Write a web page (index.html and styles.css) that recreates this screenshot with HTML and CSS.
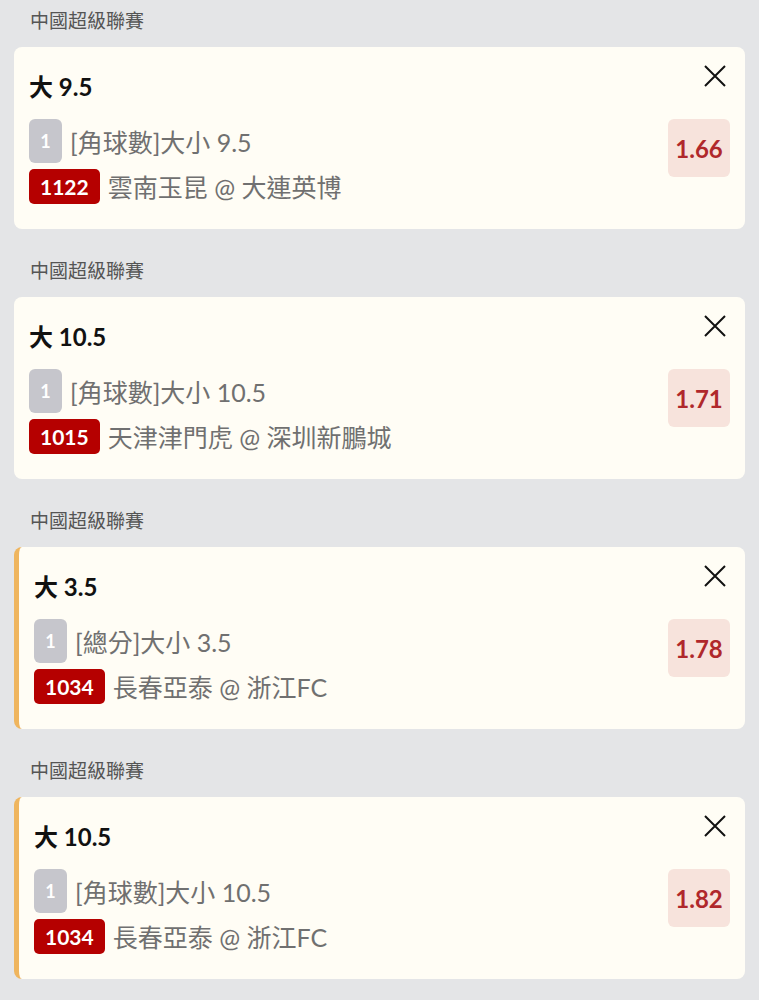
FILE: index.html
```html
<!DOCTYPE html>
<html>
<head>
    <title>Bet Slip</title>
    <meta name="viewport" content="width=device-width, initial-scale=1">
    <link rel="stylesheet" href="styles.css">
</head>
<body>
    <div class="slip">
        <div class="section">
            <div class="league">中國超級聯賽</div>
            <div class="card">
                <div class="selection">大 9.5</div>
                <span class="close"><svg viewBox="0 0 22 22" width="22" height="22"><path d="M1 1L21 21M21 1L1 21" stroke="#111" stroke-width="2" fill="none"/></svg></span>
                <div class="body">
                    <div class="lines">
                        <div class="line"><span class="leg">1</span><span class="market">[角球數]大小 9.5</span></div>
                        <div class="line"><span class="code">1122</span><span class="teams">雲南玉昆 @ 大連英博</span></div>
                    </div>
                    <div class="odds">1.66</div>
                </div>
            </div>
        </div>
        <div class="section">
            <div class="league">中國超級聯賽</div>
            <div class="card">
                <div class="selection">大 10.5</div>
                <span class="close"><svg viewBox="0 0 22 22" width="22" height="22"><path d="M1 1L21 21M21 1L1 21" stroke="#111" stroke-width="2" fill="none"/></svg></span>
                <div class="body">
                    <div class="lines">
                        <div class="line"><span class="leg">1</span><span class="market">[角球數]大小 10.5</span></div>
                        <div class="line"><span class="code">1015</span><span class="teams">天津津門虎 @ 深圳新鵬城</span></div>
                    </div>
                    <div class="odds">1.71</div>
                </div>
            </div>
        </div>
        <div class="section">
            <div class="league">中國超級聯賽</div>
            <div class="card card-changed">
                <div class="selection">大 3.5</div>
                <span class="close"><svg viewBox="0 0 22 22" width="22" height="22"><path d="M1 1L21 21M21 1L1 21" stroke="#111" stroke-width="2" fill="none"/></svg></span>
                <div class="body">
                    <div class="lines">
                        <div class="line"><span class="leg">1</span><span class="market">[總分]大小 3.5</span></div>
                        <div class="line"><span class="code">1034</span><span class="teams">長春亞泰 @ 浙江FC</span></div>
                    </div>
                    <div class="odds">1.78</div>
                </div>
            </div>
        </div>
        <div class="section">
            <div class="league">中國超級聯賽</div>
            <div class="card card-changed">
                <div class="selection">大 10.5</div>
                <span class="close"><svg viewBox="0 0 22 22" width="22" height="22"><path d="M1 1L21 21M21 1L1 21" stroke="#111" stroke-width="2" fill="none"/></svg></span>
                <div class="body">
                    <div class="lines">
                        <div class="line"><span class="leg">1</span><span class="market">[角球數]大小 10.5</span></div>
                        <div class="line"><span class="code">1034</span><span class="teams">長春亞泰 @ 浙江FC</span></div>
                    </div>
                    <div class="odds">1.82</div>
                </div>
            </div>
        </div>
    </div>
</body>
</html>
```
FILE: styles.css
```css
body {
    margin: 0;
    background: #e4e5e7;
    font-family: Lato, "Noto Sans CJK TC", sans-serif;
}
.slip {
    padding: 0 14px;
}
.section {
    margin-bottom: 21px;
}
.league {
    padding: 9px 0 14px 16px;
    line-height: 24px;
    font-size: 19px;
    color: #555;
}
.card {
    position: relative;
    height: 182px;
    box-sizing: border-box;
    padding: 25px 15px 0 15px;
    background: #fffdf5;
    border-radius: 8px;
}
.card-changed {
    border-left: 5px solid #efb55e;
}
.selection {
    line-height: 30px;
    font-size: 24px;
    font-weight: bold;
    color: #111;
    margin-bottom: 17px;
}
.close {
    position: absolute;
    top: 18px;
    right: 19px;
    width: 22px;
    height: 22px;
}
.close svg {
    display: block;
}
.body {
    display: flex;
    justify-content: space-between;
    align-items: flex-start;
}
.lines {
    display: flex;
    flex-direction: column;
    gap: 5px;
}
.line {
    display: flex;
    align-items: center;
    gap: 8px;
    color: #707070;
    font-size: 25px;
}
.leg {
    width: 33px;
    height: 44px;
    border-radius: 6px;
    background: #c6c6cc;
    color: #fff;
    font-size: 18px;
    font-weight: bold;
    display: flex;
    align-items: center;
    justify-content: center;
}
.code {
    height: 35px;
    padding: 0 11px;
    border-radius: 5px;
    background: #b50000;
    color: #fff;
    font-size: 21px;
    font-weight: bold;
    display: flex;
    align-items: center;
}
.odds {
    width: 62px;
    height: 58px;
    border-radius: 6px;
    background: #f7e3dc;
    color: #b0282b;
    font-size: 24px;
    font-weight: bold;
    display: flex;
    align-items: center;
    justify-content: center;
}
```
